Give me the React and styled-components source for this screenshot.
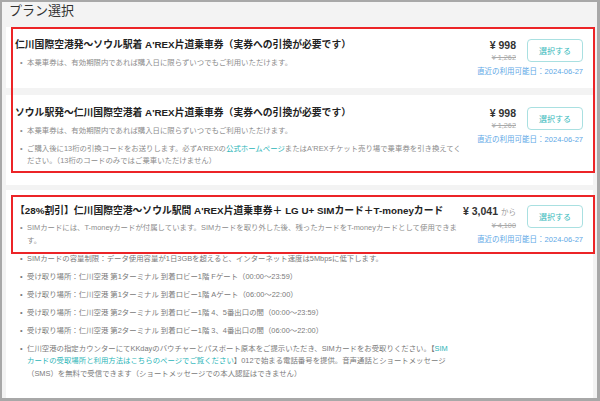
import styled, { createGlobalStyle } from 'styled-components'

const GlobalStyle = createGlobalStyle`
    html, body {
        margin: 0;
        padding: 0;
        background: #f3f3f3;
    }
    * {
        box-sizing: border-box;
    }
`

const Frame = styled.div`
    width: 600px;
    height: 401px;
    overflow: hidden;
    background: #f3f3f3;
    border-style: solid;
    border-color: #a8a8a8;
    border-width: 2px 3px 3px 2px;
    padding: 0 4px;
    font-family: 'Liberation Sans', 'Noto Sans CJK JP', sans-serif;
    color: #333;
`
const Heading = styled.h2`
    margin: 0 0 8px;
    padding-left: 3px;
    font-size: 13px;
    line-height: 17px;
    font-weight: normal;
    color: #333;
`
const Stack = styled.div`
    display: flex;
    flex-direction: column;
    gap: ${(p) => p.$gap}px;
    position: relative;
`
// red annotation frame drawn over the screenshot
const Mark = styled.div`
    position: absolute;
    left: 5px;
    right: -2px;
    top: ${(p) => p.$top}px;
    ${(p) => (p.$height ? `height: ${p.$height}px;` : `bottom: ${p.$bottom}px;`)}
    border: 2px solid #ec2427;
    pointer-events: none;
`
const Card = styled.div`
    position: relative;
    background: #fff;
    padding: ${(p) => p.$top}px 10px ${(p) => p.$bottom}px 9px;
`
const Row = styled.div`
    display: flex;
    align-items: flex-start;
    gap: 6px;
`
const Info = styled.div`
    flex: 1;
    min-width: 0;
    max-width: 451px;
    padding-bottom: ${(p) => (p.$flush ? 0 : 8)}px;
`
const Title = styled.div`
    font-size: 9.8px;
    line-height: 12px;
    font-weight: bold;
    color: #222;
    white-space: nowrap;
`
const Bullets = styled.ul`
    list-style: none;
    margin: ${(p) => p.$top}px 0 0;
    padding: 0 0 0 5px;
    display: flex;
    flex-direction: column;
    gap: 5.5px;
    max-width: ${(p) => (p.$max ? `${p.$max}px` : 'none')};
`
const Bullet = styled.li`
    position: relative;
    padding-left: 7px;
    font-size: 7.4px;
    line-height: 12.5px;
    color: ${(p) => (p.$dark ? '#7a7a7a' : '#8c8c8c')};

    &::before {
        content: '•';
        position: absolute;
        left: 0;
        top: 0;
    }
`
const TextLink = styled.a`
    color: #2bb5b8;
    text-decoration: none;
`
const Side = styled.div`
    flex-shrink: 0;
    margin-left: auto;
    display: flex;
    flex-direction: column;
    align-items: flex-end;
`
const PriceRow = styled.div`
    display: flex;
    align-items: flex-start;
    gap: 11px;
`
const PriceBlock = styled.div`
    text-align: right;
    white-space: nowrap;
`
const Price = styled.div`
    font-size: 10.5px;
    line-height: 12px;
    font-weight: bold;
    color: #333;
`
const From = styled.span`
    font-size: 7.5px;
    font-weight: normal;
    color: #999;
    margin-left: 3px;
`
const Strike = styled.div`
    font-size: 7.3px;
    line-height: 14px;
    color: #aaa;
    text-decoration: line-through;
`
const SelectButton = styled.button`
    width: 56px;
    height: 23px;
    padding: 0;
    background: #fff;
    border: 1px solid #a9e0e1;
    border-radius: 4px;
    font-family: inherit;
    font-size: 8px;
    color: #37b9bc;
    cursor: pointer;
`
const DateText = styled.div`
    font-size: 7.5px;
    line-height: 14px;
    color: #5ea8e6;
    white-space: nowrap;
`

const PriceSide = ({ price, was, from }) => (
    <Side>
        <PriceRow>
            <PriceBlock>
                <Price>
                    {price}
                    {from && <From>から</From>}
                </Price>
                <Strike>{was}</Strike>
            </PriceBlock>
            <SelectButton>選択する</SelectButton>
        </PriceRow>
        <DateText>直近の利用可能日：2024-06-27</DateText>
    </Side>
)

const pickups = [
    '受け取り場所：仁川空港 第1ターミナル 到着ロビー1階 Fゲート（00:00～23:59）',
    '受け取り場所：仁川空港 第1ターミナル 到着ロビー1階 Aゲート（06:00～22:00）',
    '受け取り場所：仁川空港 第2ターミナル 到着ロビー1階 4、5番出口の間（00:00～23:59）',
    '受け取り場所：仁川空港 第2ターミナル 到着ロビー1階 3、4番出口の間（06:00～22:00）',
]

export default function App() {
    return (
        <Frame>
            <GlobalStyle />
            <Heading>プラン選択</Heading>
            <Stack $gap={5}>
                <Stack $gap={7}>
                    <Card $top={12} $bottom={9}>
                        <Row>
                            <Info>
                                <Title>仁川国際空港発～ソウル駅着 A'REX片道乗車券（実券への引換が必要です）</Title>
                                <Bullets $top={5.5}>
                                    <Bullet>本乗車券は、有効期限内であれば購入日に限らずいつでもご利用いただけます。</Bullet>
                                </Bullets>
                            </Info>
                            <PriceSide price="¥ 998" was="¥ 1,262" />
                        </Row>
                    </Card>
                    <Card $top={12} $bottom={9}>
                        <Row>
                            <Info>
                                <Title>ソウル駅発～仁川国際空港着 A'REX片道乗車券（実券への引換が必要です）</Title>
                                <Bullets $top={5.5}>
                                    <Bullet>本乗車券は、有効期限内であれば購入日に限らずいつでもご利用いただけます。</Bullet>
                                    <Bullet>
                                        ご購入後に13桁の引換コードをお送りします。必ずA'REXの
                                        <TextLink href="#">公式ホームページ</TextLink>
                                        またはA'REXチケット売り場で乗車券を引き換えてください。（13桁のコードのみではご乗車いただけません）
                                    </Bullet>
                                </Bullets>
                            </Info>
                            <PriceSide price="¥ 998" was="¥ 1,262" />
                        </Row>
                    </Card>
                    <Mark $top={0} $bottom={12} />
                </Stack>
                <Card $top={15} $bottom={22}>
                    <Row>
                        <Info $flush>
                            <Title>【28%割引】仁川国際空港～ソウル駅間 A'REX片道乗車券＋ LG U+ SIMカード＋T-moneyカード</Title>
                            <Bullets $top={5.5}>
                                <Bullet>SIMカードには、T-moneyカードが付属しています。SIMカードを取り外した後、残ったカードをT-moneyカードとして使用できます。</Bullet>
                            </Bullets>
                        </Info>
                        <PriceSide price="¥ 3,041" was="¥ 4,100" from />
                    </Row>
                    <Bullets $top={5.5} $max={439}>
                        <Bullet $dark>SIMカードの容量制限：データ使用容量が1日3GBを超えると、インターネット速度は5Mbpsに低下します。</Bullet>
                        {pickups.map((text) => (
                            <Bullet $dark key={text}>{text}</Bullet>
                        ))}
                        <Bullet $dark>
                            仁川空港の指定カウンターにてKKdayのバウチャーとパスポート原本をご提示いただき、SIMカードをお受取りください。【
                            <TextLink href="#">SIMカードの受取場所と利用方法はこちらのページでご覧ください</TextLink>
                            】012で始まる電話番号を提供。音声通話とショートメッセージ（SMS）を無料で受信できます（ショートメッセージでの本人認証はできません）
                        </Bullet>
                    </Bullets>
                    <Mark $top={5} $height={59} />
                </Card>
            </Stack>
        </Frame>
    )
}
